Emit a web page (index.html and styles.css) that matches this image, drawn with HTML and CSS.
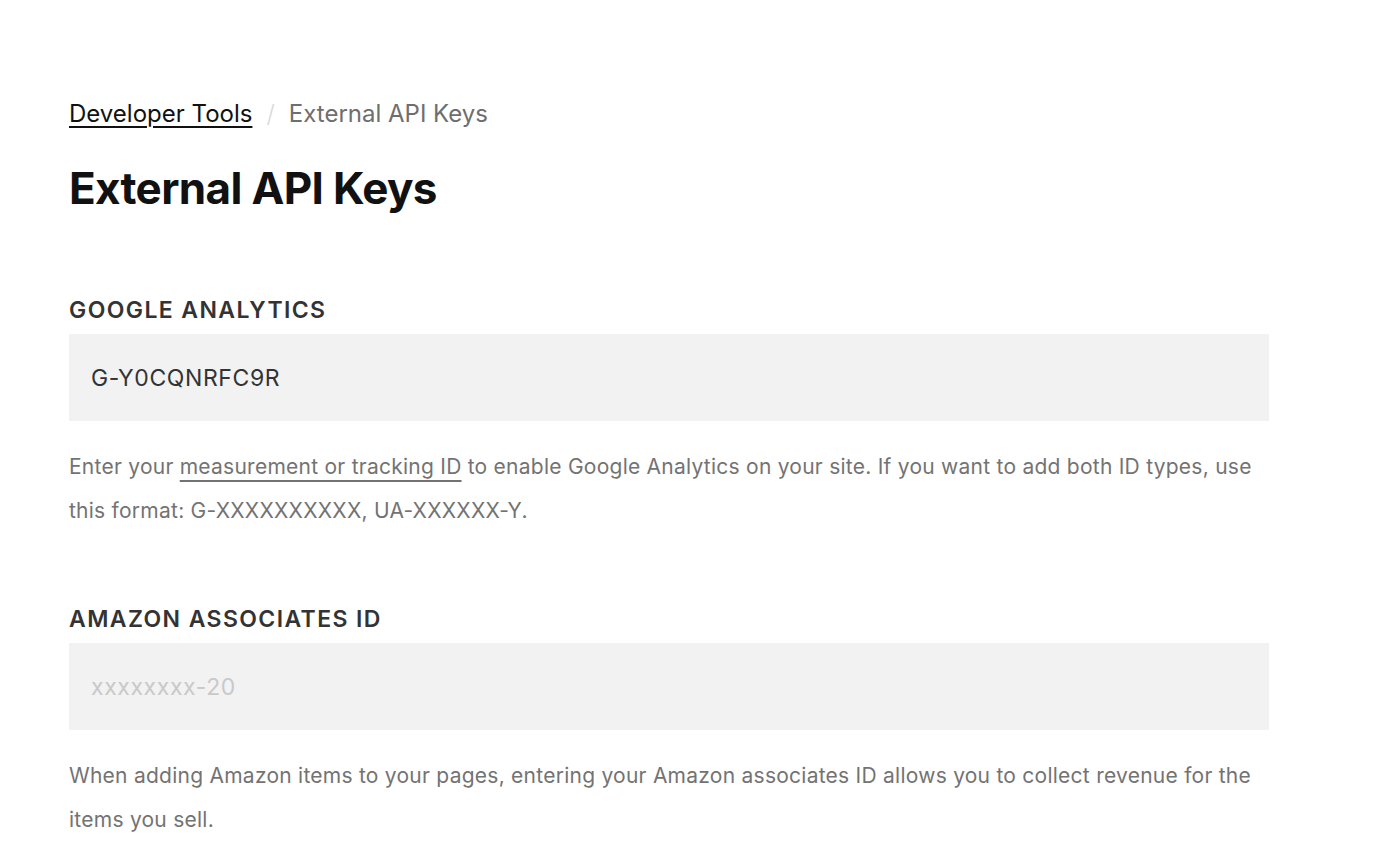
FILE: index.html
```html
<!DOCTYPE html>
<html lang="en">
<head>
<meta charset="utf-8">
<title>External API Keys</title>
<link rel="stylesheet" href="styles.css">
</head>
<body>
<main class="page">
  <nav class="crumbs">
    <a class="crumb-link" href="#">Developer Tools</a>
    <span class="crumb-sep">/</span>
    <span class="crumb-current">External API Keys</span>
  </nav>
  <h1 class="title">External API Keys</h1>

  <section class="field field-first">
    <label class="field-label" for="ga">Google Analytics</label>
    <input class="field-input" id="ga" type="text" value="G-Y0CQNRFC9R">
    <p class="field-help">Enter your <a class="help-link" href="#">measurement or tracking ID</a> to enable Google Analytics on your site. If you want to add both ID types, use this format: G-XXXXXXXXXX, UA-XXXXXX-Y.</p>
  </section>

  <section class="field">
    <label class="field-label" for="amz">Amazon Associates ID</label>
    <input class="field-input" id="amz" type="text" placeholder="xxxxxxxx-20">
    <p class="field-help">When adding Amazon items to your pages, entering your Amazon associates ID allows you to collect revenue for the items you sell.</p>
  </section>
</main>
</body>
</html>
```

FILE: styles.css
```css
* { box-sizing: border-box; }
html, body { margin: 0; padding: 0; background: #fff; }
body {
  font-family: Inter, "Noto Sans", "Liberation Sans", sans-serif;
  color: #111;
  -webkit-font-smoothing: antialiased;
}
.page {
  width: 1200px;
  margin-left: 69px;
  padding-top: 98px;
}
.crumbs {
  display: flex;
  align-items: center;
  gap: 14px;
  font-size: 24px;
  line-height: 32px;
}
.crumb-link {
  color: #111;
  text-decoration: underline;
  text-underline-offset: 4px;
  text-decoration-thickness: 2px;
}
.crumb-sep { color: #d9d9d9; font-weight: 300; }
.crumb-current { color: #6e6e6e; }
.title {
  margin: 31px 0 0;
  font-size: 44px;
  line-height: 54px;
  font-weight: 700;
  letter-spacing: -0.65px;
  color: #111;
}
.field { display: flex; flex-direction: column; }
.field-first { margin-top: 81px; }
.field + .field { margin-top: 72px; }
.field-label {
  font-size: 23px;
  line-height: 28px;
  font-weight: 600;
  letter-spacing: 1.4px;
  text-transform: uppercase;
  color: #333;
  margin-bottom: 10px;
}
.field-input {
  height: 87px;
  width: 1200px;
  border: none;
  background: #f2f2f2;
  padding: 0 22px;
  font-family: inherit;
  font-size: 23px;
  letter-spacing: 0.6px;
  color: #333;
  outline: none;
}
.field-input::placeholder { color: #c9c9c9; }
.field-help {
  margin: 24px 0 0;
  font-size: 21px;
  line-height: 44px;
  letter-spacing: 0.25px;
  color: #737373;
}
.help-link {
  color: #737373;
  text-decoration: underline;
  text-underline-offset: 6px;
  text-decoration-thickness: 2px;
}
```
